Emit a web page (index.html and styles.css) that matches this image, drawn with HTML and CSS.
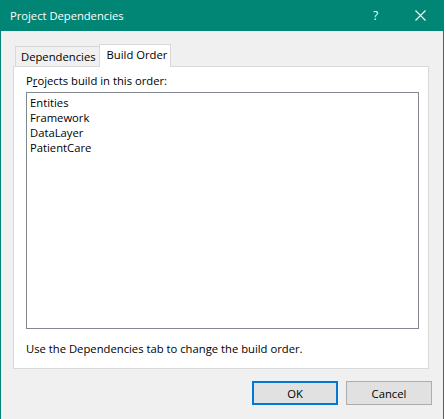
FILE: index.html
```html
<!DOCTYPE html>
<html>
<head>
<meta charset="utf-8">
<link rel="stylesheet" href="styles.css">
</head>
<body>
<div class="window">
  <div class="titlebar">
    <span class="title">Project Dependencies</span>
    <span class="tb-btn help">?</span>
    <span class="tb-btn close">
      <svg width="11" height="11" viewBox="0 0 11 11"><path d="M0.5 0.5 L10.5 10.5 M10.5 0.5 L0.5 10.5" stroke="#fff" stroke-width="1.1" fill="none"/></svg>
    </span>
  </div>
  <div class="content">
    <div class="tabs">
      <div class="tab">Dependencies</div>
      <div class="tab active">Build Order</div>
    </div>
    <div class="panel">
      <div class="label">P<u>r</u>ojects build in this order:</div>
      <div class="listbox">
        <div class="item">Entities</div>
        <div class="item">Framework</div>
        <div class="item">DataLayer</div>
        <div class="item">PatientCare</div>
      </div>
      <div class="note">Use the Dependencies tab to change the build order.</div>
    </div>
    <div class="buttons">
      <div class="btn default">OK</div>
      <div class="btn">Cancel</div>
    </div>
  </div>
</div>
</body>
</html>
```
FILE: styles.css
```css
html, body {
  margin: 0;
  padding: 0;
  background: #ffffff;
}
body {
  font-family: "Open Sans", "Noto Sans", sans-serif;
  font-size: 11.25px;
  color: #000;
}
.window {
  width: 444px;
  height: 419px;
  box-sizing: border-box;
  border-left: 1px solid #018574;
  border-right: 1px solid #018574;
  background: #f0f0f0;
  display: flex;
  flex-direction: column;
}
.titlebar {
  height: 31px;
  background: #018574;
  color: #fff;
  display: flex;
  align-items: center;
  padding-left: 9px;
  font-size: 11.2px;
}
.title {
  flex: 1;
  padding-bottom: 1px;
}
.tb-btn {
  width: 45px;
  height: 31px;
  display: flex;
  align-items: center;
  justify-content: center;
}
.help {
  font-size: 12px;
  padding-bottom: 1px;
  box-sizing: border-box;
}
.content {
  padding: 13px 0 0 12px;
  display: flex;
  flex-direction: column;
}
.tabs {
  display: flex;
  align-items: flex-end;
  margin-left: 2px;
  height: 22px;
}
.tab {
  height: 20px;
  box-sizing: border-box;
  border-top: 1px solid #d9d9d9;
  border-left: 1px solid #d9d9d9;
  background: #f0f0f0;
  padding: 1px 3px 0 5px;
  line-height: 18px;
}
.tab.active {
  height: 23px;
  margin-bottom: -1px;
  border-right: 1px solid #d9d9d9;
  background: #fff;
  padding: 0 3px 0 7px;
  line-height: 20px;
  position: relative;
  z-index: 1;
}
.panel {
  width: 416px;
  height: 303px;
  box-sizing: border-box;
  border: 1px solid #d9d9d9;
  background: #fff;
  padding: 6px 9px 0 12px;
}
.label {
  line-height: 16px;
}
.label u {
  text-decoration-thickness: 1px;
}
.listbox {
  margin-top: 3px;
  height: 237px;
  box-sizing: border-box;
  border: 1px solid #828790;
  padding: 2px 0 0 3px;
}
.item {
  line-height: 15px;
}
.note {
  margin-top: 12px;
  line-height: 16px;
}
.buttons {
  display: flex;
  justify-content: flex-end;
  gap: 8px;
  margin-top: 12px;
  padding-right: 11px;
}
.btn {
  width: 86px;
  height: 24px;
  box-sizing: border-box;
  border: 1px solid #adadad;
  background: #e1e1e1;
  display: flex;
  align-items: center;
  justify-content: center;
}
.btn.default {
  border: 2px solid #0078d7;
}
```
